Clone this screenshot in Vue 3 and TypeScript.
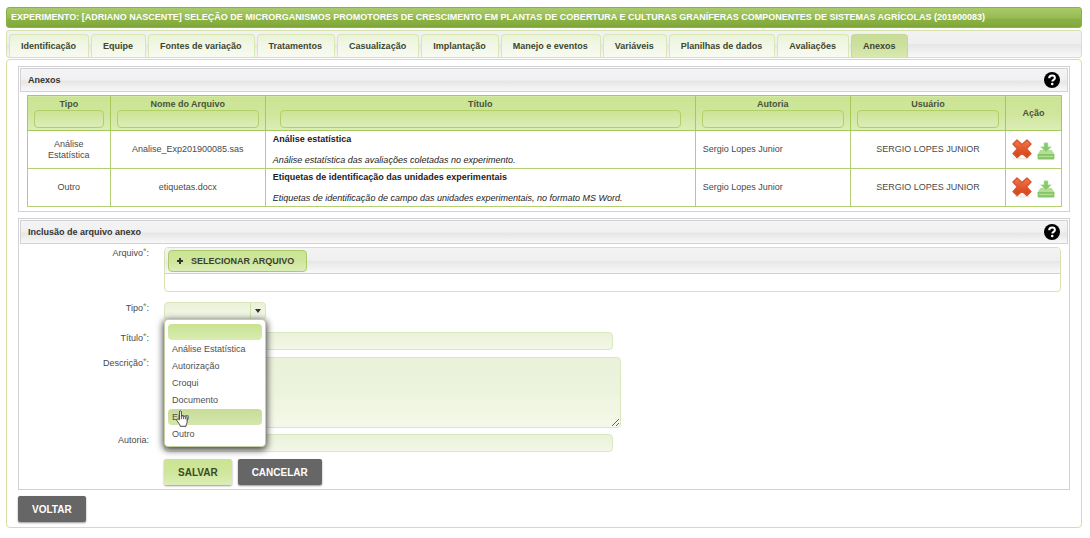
<script setup lang="ts">
import { ref } from 'vue'

interface Attachment {
  type: string
  file: string
  title: string
  description: string
  author: string
  user: string
}

const tabs: string[] = [
  'Identificação', 'Equipe', 'Fontes de variação', 'Tratamentos', 'Casualização', 'Implantação',
  'Manejo e eventos', 'Variáveis', 'Planilhas de dados', 'Avaliações', 'Anexos',
]
const activeTab = ref('Anexos')

const filters = [
  { key: 'type', label: 'Tipo' },
  { key: 'file', label: 'Nome do Arquivo' },
  { key: 'title', label: 'Título' },
  { key: 'author', label: 'Autoria' },
  { key: 'user', label: 'Usuário' },
]

const attachments: Attachment[] = [
  {
    type: 'Análise Estatística',
    file: 'Analise_Exp201900085.sas',
    title: 'Análise estatística',
    description: 'Análise estatística das avaliações coletadas no experimento.',
    author: 'Sergio Lopes Junior',
    user: 'SERGIO LOPES JUNIOR',
  },
  {
    type: 'Outro',
    file: 'etiquetas.docx',
    title: 'Etiquetas de identificação das unidades experimentais',
    description: 'Etiquetas de identificação de campo das unidades experimentais, no formato MS Word.',
    author: 'Sergio Lopes Junior',
    user: 'SERGIO LOPES JUNIOR',
  },
]

const options: string[] = ['', 'Análise Estatística', 'Autorização', 'Croqui', 'Documento', 'Erro', 'Outro']
const selectedType = ref('')
const hovered = ref('Erro')
const open = ref(true)

function choose(option: string): void {
  selectedType.value = option
  open.value = false
}
</script>

<template>
  <div class="page">
    <h1 class="title">EXPERIMENTO: [ADRIANO NASCENTE] SELEÇÃO DE MICRORGANISMOS PROMOTORES DE CRESCIMENTO EM PLANTAS DE COBERTURA E CULTURAS GRANÍFERAS COMPONENTES DE SISTEMAS AGRÍCOLAS (201900083)</h1>

    <nav class="tabs" role="tablist">
      <button
        v-for="tab in tabs"
        :key="tab"
        type="button"
        role="tab"
        class="tab"
        :class="{ active: tab === activeTab }"
        :aria-selected="tab === activeTab"
        @click="activeTab = tab"
      >{{ tab }}</button>
    </nav>

    <main class="panel">
      <section class="box">
        <header class="box-head">
          <h2>Anexos</h2>
          <button type="button" class="icon-btn" aria-label="Ajuda sobre anexos">
            <svg width="16" height="16" viewBox="0 0 16 16"><circle cx="8" cy="8" r="8" /><path d="M5.200 6.200C5.200 4.400 6.400 3.500 8.100 3.500c1.600 0 2.800 1 2.800 2.400C10.900 7.800 8.300 7.900 8.300 9.600" fill="none" stroke="#fff" stroke-width="2" /><circle cx="8.2" cy="12" r="1.3" fill="#fff" /></svg>
          </button>
        </header>
        <table class="grid">
          <colgroup>
            <col class="c-type"><col class="c-file"><col class="c-title"><col class="c-author"><col class="c-user"><col class="c-action">
          </colgroup>
          <thead>
            <tr>
              <th v-for="f in filters" :key="f.key" scope="col">
                <label :for="'filter-' + f.key">{{ f.label }}</label>
                <input :id="'filter-' + f.key" type="text" :class="{ inset: f.key === 'title' }">
              </th>
              <th scope="col" class="action-head">Ação</th>
            </tr>
          </thead>
          <tbody>
            <tr v-for="a in attachments" :key="a.file">
              <td>{{ a.type }}</td>
              <td>{{ a.file }}</td>
              <td class="left title-cell"><strong>{{ a.title }}</strong><em>{{ a.description }}</em></td>
              <td class="left">{{ a.author }}</td>
              <td>{{ a.user }}</td>
              <td class="actions">
                <div class="action-row">
                  <button type="button" class="icon-btn" :aria-label="'Excluir ' + a.file">
                    <svg width="20" height="21" viewBox="0 0 20 21">
                      <ellipse cx="10" cy="19.6" rx="8" ry="1" fill="#ece8e6" />
                      <path d="M5 1 10 5.600 15 1 19 5 14.600 9.800 19 14.600 15 18.600 10 14.200 5 18.600 1 14.600 5.400 9.800 1 5z" fill="url(#red-fade)" stroke="#d9552b" stroke-width="1.4" stroke-linejoin="round" />
                      <defs><linearGradient id="red-fade" x1="0" y1="0" x2="0" y2="1"><stop offset="0" stop-color="#ec7d52" /><stop offset=".5" stop-color="#e4582c" /><stop offset="1" stop-color="#cc4519" /></linearGradient></defs>
                    </svg>
                  </button>
                  <button type="button" class="icon-btn down" :aria-label="'Baixar ' + a.file">
                    <svg width="18" height="18" viewBox="0 0 18 18">
                      <path d="M3.400 8h11.200l2.800 4.200H.6z" fill="#b4dd9a" />
                      <path d="M.6 12h16.800v4.600q0 .8-.8.8H1.400q-.8 0-.8-.8z" fill="#86c765" />
                      <path d="M2 14.500h14" stroke="#b5e09c" stroke-width="1.2" />
                      <path d="M7 .8h4v4h3.400L9 10.400 3.600 4.800H7z" fill="#85ca6c" stroke="#c3e6b2" stroke-width=".6" />
                    </svg>
                  </button>
                </div>
              </td>
            </tr>
          </tbody>
        </table>
      </section>

      <section class="box">
        <header class="box-head">
          <h2>Inclusão de arquivo anexo</h2>
          <button type="button" class="icon-btn" aria-label="Ajuda sobre inclusão de arquivo">
            <svg width="16" height="16" viewBox="0 0 16 16"><circle cx="8" cy="8" r="8" /><path d="M5.200 6.200C5.200 4.400 6.400 3.500 8.100 3.500c1.600 0 2.800 1 2.800 2.400C10.900 7.800 8.300 7.900 8.300 9.600" fill="none" stroke="#fff" stroke-width="2" /><circle cx="8.2" cy="12" r="1.3" fill="#fff" /></svg>
          </button>
        </header>
        <form class="form" @submit.prevent>
          <span id="file-label" class="label">Arquivo<sup>*</sup>:</span>
          <div class="upload">
            <div class="upload-bar">
              <button type="button" class="pick" aria-describedby="file-label">
                <svg width="6" height="6" viewBox="0 0 6 6"><path d="M3 0v6M0 3h6" stroke="#333" stroke-width="2" /></svg>
                <span>SELECIONAR ARQUIVO</span>
              </button>
            </div>
            <div class="upload-list"></div>
          </div>

          <label class="label" for="type">Tipo<sup>*</sup>:</label>
          <div class="select-wrap">
            <select id="type" v-model="selectedType" @mousedown.prevent="open = !open">
              <option v-for="o in options" :key="o" :value="o">{{ o }}</option>
            </select>
            <span class="arrow"><svg width="6" height="4" viewBox="0 0 6 4"><path d="M0 0h6L3 4z" fill="#333" /></svg></span>
            <ul v-if="open" class="menu" role="listbox" aria-label="Tipo">
              <li
                v-for="o in options"
                :key="o"
                role="option"
                :aria-selected="o === selectedType"
                :class="{ selected: o === selectedType, hover: o === hovered }"
                @mouseenter="hovered = o"
                @click="choose(o)"
              >
                {{ o }}
                <svg v-if="o === hovered" class="pointer" width="12" height="17" viewBox="0 0 12 17">
                  <path d="M3.400 9.800V2c0-1.700 2-1.700 2 0v4.400c.2-1 1.900-.9 2 .3.400-.9 1.800-.6 1.900.5.500-.8 1.800-.4 1.800.7V12c0 1-.9 2-1.100 4.300H4.300C3.900 14 2 12.700.8 10.300.3 9 1.700 8.300 3.400 9.800z" fill="#fff" stroke="#333" stroke-width=".9" />
                  <path d="M5.400 6.400v2.800M7.400 6.800v2.400M9.300 7.300v2" stroke="#333" stroke-width=".8" />
                </svg>
              </li>
            </ul>
          </div>

          <label class="label" for="title">Título<sup>*</sup>:</label>
          <input id="title" class="field" type="text">

          <label class="label" for="description">Descrição<sup>*</sup>:</label>
          <textarea id="description" class="field area"></textarea>

          <label class="label" for="author">Autoria:</label>
          <input id="author" class="field" type="text">

          <div class="buttons">
            <button type="submit" class="btn primary">SALVAR</button>
            <button type="button" class="btn">CANCELAR</button>
          </div>
        </form>
      </section>

      <button type="button" class="btn">VOLTAR</button>
    </main>
  </div>
</template>

<style>
body { margin: 0; background: #fff; }
</style>

<style scoped>
* { box-sizing: border-box; }
.page {
  padding: 7px 8px 9px 6px;
  font-family: "Liberation Sans", Arial, sans-serif;
  font-size: 9px;
  line-height: 11px;
  color: #4a4a4a;
}
button, input, select, textarea { font: inherit; color: inherit; margin: 0; }
button { cursor: pointer; }
.title {
  margin: 0 0 2px;
  padding: 0 4px;
  border: 1px solid #8db04a;
  border-radius: 3px;
  background: linear-gradient(#a8cb68, #98bc54 50%, #8bb145 60%, #80a838);
  color: #fff;
  font-size: 9px;
  line-height: 19px;
  font-weight: bold;
  white-space: nowrap;
  overflow: hidden;
}
.tabs {
  display: flex;
  gap: 2px;
  height: 28px;
  padding: 3px 2px 0;
  border: 1px solid #d6e3ae;
  border-radius: 3px;
  background: linear-gradient(#f2f2f2, #efefef 50%, #e6e6e6 52%, #f8f8f8);
}
.tab {
  padding: 0 12px 0 11px;
  border: 1px solid #d9e8b2;
  border-bottom: 0;
  border-radius: 4px 4px 0 0;
  background: linear-gradient(#eaf3d8, #f2f7e6 50%, #f8faf1);
  color: #3c4630;
  font-weight: bold;
  white-space: nowrap;
}
.tab.active { background: linear-gradient(#c8dd96, #cde09f 50%, #d8e9af); border-color: #c3d994; }
.panel {
  margin-top: 1px;
  padding: 6px 11px 5px;
  border: 1px solid #d2e0a4;
  border-radius: 4px;
}
.box { border: 1px solid #d2d2d6; padding: 1px; margin-bottom: 6px; }
.box-head {
  display: flex;
  align-items: center;
  justify-content: space-between;
  height: 24px;
  padding: 0 7px;
  border: 1px solid #d2d2d6;
  background: linear-gradient(#f4f4f4, #f0f0f0 50%, #e6e6e6 56%, #f8f8f8);
}
.box-head h2 { margin: 0; font-size: 9px; color: #333; }
.icon-btn { display: block; padding: 0; border: 0; background: none; }
.icon-btn svg { display: block; }
.grid {
  width: calc(100% - 13px);
  margin: 3px 6px 3px 7px;
  border-collapse: collapse;
  table-layout: fixed;
}
.c-type { width: 8%; }
.c-file { width: 15%; }
.c-author { width: 15%; }
.c-user { width: 15%; }
.c-action { width: 56px; }
.grid th, .grid td { border: 1px solid #b3cf72; padding: 0 7px; text-align: center; }
.grid th {
  height: 35px;
  padding: 2px 6px;
  background: linear-gradient(#cbe493, #cfe69b 50%, #dcedb8);
  border-color: #a5c95a;
  color: #48543a;
}
.grid th label { display: block; line-height: 12px; }
.grid th input {
  display: block;
  width: 100%;
  height: 18px;
  margin: 0;
  border: 1px solid #b0d068;
  border-radius: 4px;
  background: linear-gradient(#cbe493, #dcedb8);
}
.grid th input.inset { width: calc(100% - 16px); margin: 0 auto; }
.grid td { height: 38px; }
.grid td.left { text-align: left; }
.title-cell strong, .title-cell em { display: block; color: #222; }
.title-cell strong { margin-bottom: 10px; }
.grid td.actions { padding: 0; }
.action-row { display: flex; justify-content: center; gap: 5px; }
.icon-btn.down { padding-top: 3px; }
.form {
  display: grid;
  grid-template-columns: 129px minmax(0, 1fr);
  column-gap: 15px;
  align-items: start;
  padding: 3px 7px 3px 0;
}
.label { text-align: right; padding-top: 1px; }
.label sup { font-size: 9px; line-height: 0; vertical-align: 2px; color: #7c9440; }
.upload { border: 1px solid #d6e3ae; border-radius: 4px; margin-bottom: 10px; overflow: hidden; }
.upload-bar {
  height: 26px;
  padding: 2px 3px;
  border-bottom: 1px solid #d0d0d0;
  background: linear-gradient(#f3f3f3, #efefef 50%, #e6e6e6 52%, #f8f8f8);
}
.upload-list { height: 17px; }
.pick {
  display: flex;
  align-items: center;
  gap: 8px;
  height: 22px;
  padding: 0 12px 0 8px;
  border: 1px solid #aacb67;
  border-radius: 4px;
  background: linear-gradient(#cbe493, #cfe69b 50%, #dcedb8);
  font-weight: bold;
  color: #3b3f33;
}
.select-wrap { position: relative; width: 102px; height: 18px; margin-bottom: 12px; }
.select-wrap select {
  display: block;
  appearance: none;
  width: 100%;
  height: 18px;
  padding: 0 20px 0 6px;
  border: 1px solid #dbe7bd;
  border-radius: 4px;
  background: linear-gradient(#eaf2d8, #f3f7e8);
}
.arrow {
  position: absolute;
  top: 1px;
  right: 1px;
  bottom: 1px;
  width: 15px;
  display: flex;
  align-items: center;
  justify-content: center;
  border-left: 1px solid #d2e0ae;
  pointer-events: none;
}
.menu {
  position: absolute;
  z-index: 2;
  top: 17px;
  left: 0;
  width: 102px;
  margin: 0;
  padding: 4px 3px;
  list-style: none;
  border: 1px solid #c3cfa5;
  border-radius: 4px;
  background: #fff;
  box-shadow: 0 2px 7px 1px #444;
}
.menu li {
  position: relative;
  height: 16px;
  margin-bottom: 1px;
  padding-left: 4px;
  border-radius: 4px;
  line-height: 16px;
  color: #4f4f4f;
  white-space: nowrap;
}
.menu li:last-child { margin-bottom: 0; }
.menu .selected { background: linear-gradient(#c9e28f, #d9ecb3); }
.menu .hover { background: linear-gradient(#c8dc97, #d5e6ad); }
.pointer { position: absolute; left: 8px; top: 1px; }
.field {
  display: block;
  width: 50%;
  height: 18px;
  margin-bottom: 7px;
  padding: 0 4px;
  border: 1px solid #dbe7bd;
  border-radius: 4px;
  background: linear-gradient(#ebf2da, #f3f7e7);
}
.area {
  width: 51%;
  height: 71px;
  margin-bottom: 6px;
  background: linear-gradient(#ebf2da, #edf4de 50%, #f4f8e9);
}
.buttons { grid-column: 2; display: flex; gap: 6px; }
.btn {
  height: 26px;
  padding: 0 14px;
  border: 0;
  border-radius: 2px;
  background: #666;
  box-shadow: 0 1px 2px #999;
  color: #fff;
  font-size: 10px;
  font-weight: bold;
}
.btn.primary { background: linear-gradient(#cbe493, #cfe69b 50%, #dcedb8); color: #3b4a20; }
</style>
